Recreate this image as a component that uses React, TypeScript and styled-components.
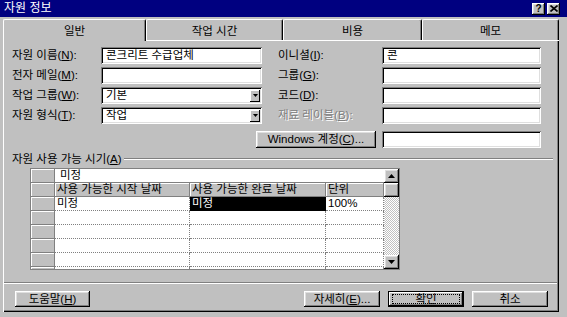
import React from "react";
import styled, { createGlobalStyle } from "styled-components";

const GlobalStyle = createGlobalStyle`
  html, body {
    margin: 0;
    padding: 0;
    background: #c0c0c0;
  }
  body {
    font-family: "Liberation Sans", "Noto Sans CJK KR", sans-serif;
    font-size: 11.5px;
    color: #000;
  }
  * {
    box-sizing: border-box;
  }
`;

// win98 style bevels
const raised = `box-shadow: inset -1px -1px #000, inset 1px 1px #fff, inset -2px -2px #808080, inset 2px 2px #dfdfdf;`;
const sunken = `box-shadow: inset 1px 1px #808080, inset -1px -1px #fff, inset 2px 2px #000, inset -2px -2px #dfdfdf;`;

const Window = styled.div`
  width: 567px;
  height: 317px;
  background: #c0c0c0;
  display: flex;
  flex-direction: column;
  overflow: hidden;
`;

const TitleBar = styled.div`
  height: 17px;
  background: #000080;
  color: #fff;
  display: flex;
  align-items: center;
  padding: 0 7px 0 4px;
  font-size: 12px;
`;

const TitleText = styled.span`
  flex: 1;
  line-height: 17px;
`;

const TitleButton = styled.div<{ $gap?: number }>`
  width: 13px;
  height: 12px;
  margin-left: ${(p) => p.$gap ?? 0}px;
  background: #c0c0c0;
  ${raised}
  display: flex;
  align-items: center;
  justify-content: center;
  color: #000;
  font-weight: bold;
  font-size: 10px;
  line-height: 10px;
`;

const TabStrip = styled.div`
  display: flex;
  align-items: flex-end;
  height: 23px;
  margin-left: 3px;
`;

const Tab = styled.div<{ $w: number; $active?: boolean }>`
  width: ${(p) => p.$w}px;
  height: ${(p) => (p.$active ? 22 : 21)}px;
  margin-bottom: ${(p) => (p.$active ? -1 : 0)}px;
  position: relative;
  z-index: ${(p) => (p.$active ? 1 : 0)};
  background: #c0c0c0;
  border-top: 1px solid #fff;
  border-left: 1px solid #fff;
  border-right: 1px solid #000;
  border-radius: 2px 2px 0 0;
  box-shadow: inset -1px 0 #808080;
  display: flex;
  align-items: center;
  justify-content: center;
  padding-bottom: ${(p) => (p.$active ? 1 : 0)}px;
`;

const Panel = styled.div`
  width: 556px;
  height: 272px;
  margin-left: 3px;
  box-shadow: inset 1px 1px #fff, inset -1px -1px #000, inset -2px -2px #808080;
  display: flex;
  flex-direction: column;
  padding-top: 7px;
`;

const FormGrid = styled.div`
  margin-left: 9px;
  display: grid;
  grid-template-columns: 89px 161px 16px 104px 159px;
  grid-template-rows: 17px 17px 17px 17px 21px;
  row-gap: 3px;
  align-items: center;
`;

const Label = styled.div<{ $col?: number; $disabled?: boolean }>`
  grid-column: ${(p) => p.$col ?? "auto"};
  white-space: nowrap;
  line-height: 13px;
  color: ${(p) => (p.$disabled ? "#808080" : "#000")};
  text-shadow: ${(p) => (p.$disabled ? "1px 1px #fff" : "none")};
`;

const Field = styled.div<{ $col?: number }>`
  grid-column: ${(p) => p.$col ?? "auto"};
  height: 17px;
  background: #fff;
  ${sunken}
  display: flex;
  align-items: center;
  justify-content: space-between;
  padding: 0 2px 0 5px;
  line-height: 13px;
  align-self: end;
`;

const DropButton = styled.div`
  width: 10px;
  height: 12px;
  background: #c0c0c0;
  box-shadow: inset -1px -1px #000, inset 1px 1px #fff;
  display: flex;
  align-items: center;
  justify-content: center;
`;

const AccountButton = styled.div`
  grid-column: 2 / 5;
  justify-self: end;
  align-self: end;
  margin-right: 6px;
  width: 120px;
  height: 17px;
  background: #c0c0c0;
  ${raised}
  display: flex;
  align-items: center;
  justify-content: center;
  line-height: 13px;
`;

const GroupHeader = styled.div`
  margin: 4px 6px 0 9px;
  height: 14px;
  display: flex;
  align-items: center;
  gap: 2px;
  line-height: 13px;
`;

const GroupLine = styled.div`
  flex: 1;
  height: 2px;
  border-top: 1px solid #808080;
  border-bottom: 1px solid #fff;
`;

const Sheet = styled.div`
  margin: 2px 0 0 27px;
  width: 370px;
  height: 102px;
  display: flex;
  border: 1px solid #808080;
  background: #fff;
`;

const Cells = styled.div`
  flex: 1;
  display: grid;
  grid-template-columns: 24px 135px 136px 58px;
  grid-auto-rows: 14px;
  overflow: hidden;
  align-content: start;
`;

const RowHead = styled.div`
  background: #c0c0c0;
  border-right: 1px solid #808080;
  border-bottom: 1px solid #808080;
  box-shadow: inset 1px 1px #fff;
`;

const ColHead = styled.div`
  background: #c0c0c0;
  border-right: 1px solid #808080;
  border-bottom: 1px solid #808080;
  box-shadow: inset 1px 1px #fff;
  padding-left: 2px;
  line-height: 13px;
  white-space: nowrap;
  overflow: hidden;
`;

const EditCell = styled.div`
  grid-column: span 3;
  background: #fff;
  border-bottom: 1px solid #808080;
  padding-left: 5px;
  line-height: 13px;
`;

const Cell = styled.div<{ $selected?: boolean }>`
  background: ${(p) => (p.$selected ? "#000" : "#fff")};
  color: ${(p) => (p.$selected ? "#fff" : "#000")};
  border-right: 1px dotted ${(p) => (p.$selected ? "#000" : "#808080")};
  border-bottom: 1px dotted ${(p) => (p.$selected ? "#000" : "#808080")};
  padding-left: 2px;
  line-height: 13px;
  white-space: nowrap;
`;

const VScroll = styled.div`
  width: 15px;
  display: flex;
  flex-direction: column;
`;

const ScrollButton = styled.div`
  height: 14px;
  background: #c0c0c0;
  ${raised}
  display: flex;
  align-items: center;
  justify-content: center;
`;

const ScrollTrack = styled.div`
  flex: 1;
  background: repeating-conic-gradient(#c0c0c0 0 25%, #fff 0 50%) 0 0 / 2px 2px;
`;

const Separator = styled.div`
  margin: 12px 2px 0 1px;
  height: 2px;
  border-top: 1px solid #808080;
  border-bottom: 1px solid #fff;
`;

const ButtonRow = styled.div`
  margin-top: 7px;
  padding: 0 11px 0 12px;
  display: flex;
  gap: 8px;
`;

const Spacer = styled.div`
  flex: 1;
`;

const PushButton = styled.div<{ $default?: boolean; $w?: number }>`
  width: ${(p) => p.$w ?? 76}px;
  height: 16px;
  padding: 3px 4px;
  background: #c0c0c0;
  ${(p) =>
    p.$default
      ? `box-shadow: inset 0 0 0 1px #000, inset -2px -2px #000, inset 2px 2px #fff, inset -3px -3px #808080;`
      : raised}
  display: flex;
  align-items: center;
  justify-content: center;
  line-height: 13px;
  white-space: nowrap;
`;

const FocusRing = styled.span`
  flex: 1;
  align-self: stretch;
  border: 1px dotted #000;
  display: flex;
  align-items: center;
  justify-content: center;
  line-height: 10px;
`;

const Arrow: React.FC<{ up?: boolean }> = ({ up }) => (
  <svg width="7" height="4" viewBox="0 0 7 4">
    <path d={up ? "M3.5 0 L7 4 L0 4 Z" : "M0 0 L7 0 L3.5 4 Z"} fill="#000" />
  </svg>
);

const SmallArrow = () => (
  <svg width="5" height="3" viewBox="0 0 5 3">
    <path d="M0 0 L5 0 L2.5 3 Z" fill="#000" />
  </svg>
);

const CloseGlyph = () => (
  <svg width="8" height="7" viewBox="0 0 8 7">
    <path d="M0.5 0.5 L7.5 6.5 M7.5 0.5 L0.5 6.5" stroke="#000" strokeWidth="1.6" />
  </svg>
);

const tabs = [
  { label: "일반", w: 143 },
  { label: "작업 시간", w: 137 },
  { label: "비용", w: 139 },
  { label: "메모", w: 137 },
];

const App: React.FC = () => {
  const emptyRows = [0, 1, 2, 3, 4];

  return (
    <>
      <GlobalStyle />
      <Window>
        <TitleBar>
          <TitleText>자원 정보</TitleText>
          <TitleButton>?</TitleButton>
          <TitleButton $gap={2}>
            <CloseGlyph />
          </TitleButton>
        </TitleBar>

        <TabStrip>
          {tabs.map((t, i) => (
            <Tab key={t.label} $w={t.w} $active={i === 0}>
              {t.label}
            </Tab>
          ))}
        </TabStrip>

        <Panel>
          <FormGrid>
            <Label>
              자원 이름(<u>N</u>):
            </Label>
            <Field>콘크리트 수급업체</Field>
            <Label $col={4}>
              이니셜(<u>I</u>):
            </Label>
            <Field>콘</Field>

            <Label>
              전자 메일(<u>M</u>):
            </Label>
            <Field />
            <Label $col={4}>
              그룹(<u>G</u>):
            </Label>
            <Field />

            <Label>
              작업 그룹(<u>W</u>):
            </Label>
            <Field>
              기본
              <DropButton>
                <SmallArrow />
              </DropButton>
            </Field>
            <Label $col={4}>
              코드(<u>D</u>):
            </Label>
            <Field />

            <Label>
              자원 형식(<u>T</u>):
            </Label>
            <Field>
              작업
              <DropButton>
                <SmallArrow />
              </DropButton>
            </Field>
            <Label $col={4} $disabled>
              재료 레이블(<u>B</u>):
            </Label>
            <Field />

            <AccountButton>
              Windows 계정(<u>C</u>)...
            </AccountButton>
            <Field $col={5} />
          </FormGrid>

          <GroupHeader>
            <span>
              자원 사용 가능 시기(<u>A</u>)
            </span>
            <GroupLine />
          </GroupHeader>

          <Sheet>
            <Cells>
              <RowHead />
              <EditCell>미정</EditCell>

              <RowHead />
              <ColHead>사용 가능한 시작 날짜</ColHead>
              <ColHead>사용 가능한 완료 날짜</ColHead>
              <ColHead>단위</ColHead>

              <RowHead />
              <Cell>미정</Cell>
              <Cell $selected>미정</Cell>
              <Cell>100%</Cell>

              {emptyRows.map((r) => (
                <React.Fragment key={r}>
                  <RowHead />
                  <Cell />
                  <Cell />
                  <Cell />
                </React.Fragment>
              ))}
            </Cells>
            <VScroll>
              <ScrollButton>
                <Arrow up />
              </ScrollButton>
              <ScrollButton />
              <ScrollTrack />
              <ScrollButton>
                <Arrow />
              </ScrollButton>
            </VScroll>
          </Sheet>

          <Separator />

          <ButtonRow>
            <PushButton $w={75}>
              도움말(<u>H</u>)
            </PushButton>
            <Spacer />
            <PushButton>
              자세히(<u>E</u>)...
            </PushButton>
            <PushButton $default>
              <FocusRing>확인</FocusRing>
            </PushButton>
            <PushButton>취소</PushButton>
          </ButtonRow>
        </Panel>
      </Window>
    </>
  );
};

export default App;
